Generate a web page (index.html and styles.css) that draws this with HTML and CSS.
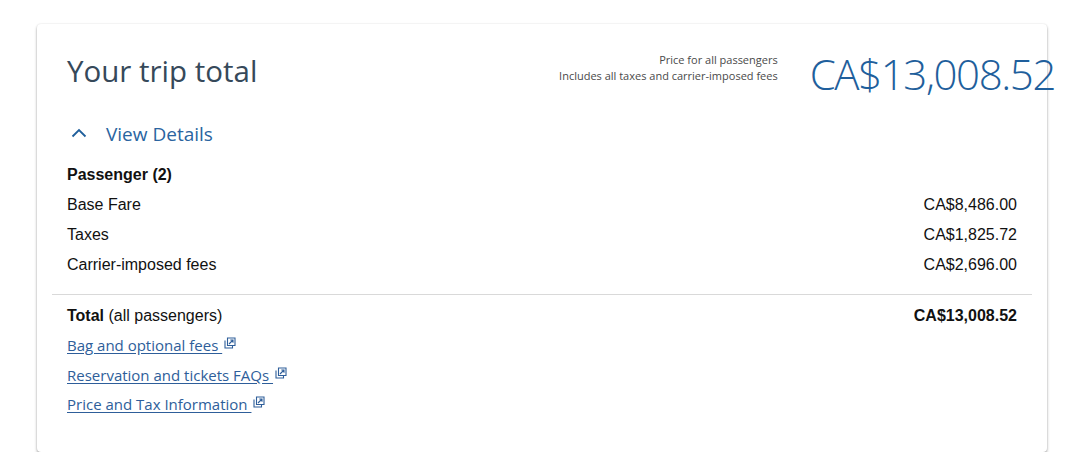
FILE: index.html
```html
<!DOCTYPE html>
<html>
<head>
<meta charset="utf-8">
<link rel="stylesheet" href="styles.css">
</head>
<body>
<div class="page">
  <section class="card">
    <header class="head">
      <h1 class="title">Your trip total</h1>
      <div class="summary">
        <div class="note">
          <div>Price for all passengers</div>
          <div>Includes all taxes and carrier-imposed fees</div>
        </div>
        <div class="price">CA$13,008.52</div>
      </div>
    </header>
    <button class="toggle">
      <svg class="chev" width="16" height="10" viewBox="0 0 16 10"><path d="M1.5 8.5 L8 2 L14.5 8.5" fill="none" stroke="#1f5f9c" stroke-width="1.8"/></svg>
      <span>View Details</span>
    </button>
    <div class="details">
      <div class="rows">
        <div class="row strong"><span>Passenger (2)</span></div>
        <div class="row"><span>Base Fare</span><span>CA$8,486.00</span></div>
        <div class="row"><span>Taxes</span><span>CA$1,825.72</span></div>
        <div class="row"><span>Carrier-imposed fees</span><span>CA$2,696.00</span></div>
      </div>
      <div class="rows total-block">
        <div class="row"><span><b>Total</b> (all passengers)</span><b>CA$13,008.52</b></div>
        <div class="links">
          <a class="link" href="#">Bag and optional fees <svg class="ext" width="12" height="12" viewBox="0 0 12 12"><path d="M1 3.5 V11 H8.5 V8" fill="none" stroke="#2e5e9a" stroke-width="1.1"/><path d="M3.5 1 H11 V8.5 H3.5 Z" fill="none" stroke="#2e5e9a" stroke-width="1.1"/><path d="M5 7 L9 3 M6.3 3 H9 V5.7" fill="none" stroke="#2e5e9a" stroke-width="1.1"/></svg></a>
          <a class="link" href="#">Reservation and tickets FAQs <svg class="ext" width="12" height="12" viewBox="0 0 12 12"><path d="M1 3.5 V11 H8.5 V8" fill="none" stroke="#2e5e9a" stroke-width="1.1"/><path d="M3.5 1 H11 V8.5 H3.5 Z" fill="none" stroke="#2e5e9a" stroke-width="1.1"/><path d="M5 7 L9 3 M6.3 3 H9 V5.7" fill="none" stroke="#2e5e9a" stroke-width="1.1"/></svg></a>
          <a class="link" href="#">Price and Tax Information <svg class="ext" width="12" height="12" viewBox="0 0 12 12"><path d="M1 3.5 V11 H8.5 V8" fill="none" stroke="#2e5e9a" stroke-width="1.1"/><path d="M3.5 1 H11 V8.5 H3.5 Z" fill="none" stroke="#2e5e9a" stroke-width="1.1"/><path d="M5 7 L9 3 M6.3 3 H9 V5.7" fill="none" stroke="#2e5e9a" stroke-width="1.1"/></svg></a>
        </div>
      </div>
    </div>
  </section>
</div>
</body>
</html>
```

FILE: styles.css
```css
* { box-sizing: border-box; }
html, body { margin: 0; padding: 0; background: #fff; }
.page { padding: 24px 37px 0 37px; }
.card {
  width: 1010px;
  height: 428px;
  background: #fff;
  border-radius: 4px;
  box-shadow: 0 2px 3px rgba(0,0,0,0.32), 0 0 2px rgba(0,0,0,0.12);
  padding: 0 15px;
}
.head {
  display: flex;
  align-items: center;
  justify-content: space-between;
  padding: 12px 0 12px 15px;
  height: 94px;
}
.title {
  margin: 0;
  font-family: "Open Sans", sans-serif;
  font-weight: 400;
  font-size: 29.5px;
  line-height: 36px;
  color: #36495a;
}
.summary { display: flex; align-items: center; gap: 32px; margin-right: -23px; }
.note {
  font-family: "Open Sans", sans-serif;
  font-size: 11px;
  line-height: 16px;
  color: #4a4a4a;
  text-align: right;
  margin-top: -6px;
}
.price {
  font-family: "Open Sans", sans-serif;
  font-weight: 300;
  font-size: 42px;
  line-height: 56px;
  color: #1f5f9c;
  letter-spacing: -1.4px;
  margin-top: 6px;
}
.toggle {
  display: flex;
  align-items: center;
  gap: 19px;
  background: none;
  border: 0;
  padding: 0 0 0 19px;
  margin: 1px 0 0 0;
  height: 30px;
  font-family: "Open Sans", sans-serif;
  font-size: 19px;
  color: #2a64a0;
  cursor: pointer;
}
.chev { margin-top: -2px; }
.details { margin-top: 11px; }
.rows { padding: 0 15px; }
.row {
  display: flex;
  justify-content: space-between;
  font-family: "Liberation Sans", Arial, sans-serif;
  font-size: 16px;
  line-height: 30px;
  color: #111;
}
.row.strong { font-weight: 700; }
.total-block {
  border-top: 1px solid #d9d9d9;
  margin-top: 14px;
  padding-top: 6px;
}
.links { display: flex; flex-direction: column; align-items: flex-start; }
.link {
  font-family: "Open Sans", sans-serif;
  font-size: 15px;
  line-height: 29.5px;
  color: #2e5e9a;
  text-decoration: underline;
  text-underline-offset: 2px;
}
.ext { vertical-align: 2px; margin-left: 2px; }
```
